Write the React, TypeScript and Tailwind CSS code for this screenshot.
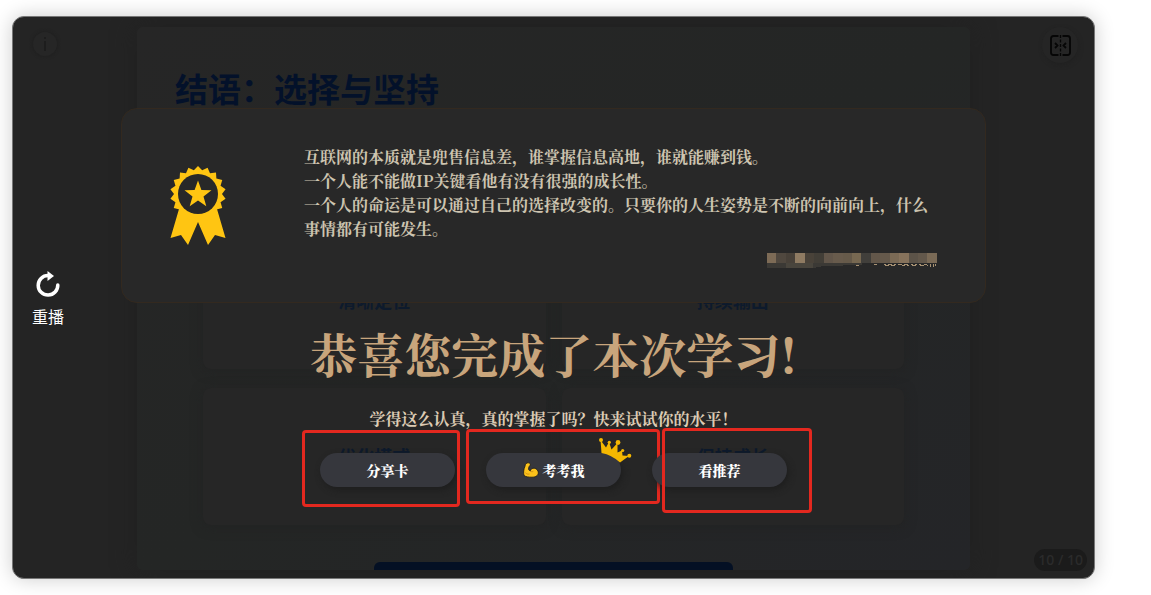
import React from 'react';

const serif = "font-['Noto_Serif_CJK_SC','Noto_Serif_SC','Noto_Sans_CJK_SC',serif]";
const sans = "font-['Noto_Sans','Noto_Sans_CJK_SC',sans-serif]";

const quotes = [
  '互联网的本质就是兜售信息差，谁掌握信息高地，谁就能赚到钱。',
  '一个人能不能做IP关键看他有没有很强的成长性。',
  '一个人的命运是可以通过自己的选择改变的。只要你的人生姿势是不断的向前向上，什么事情都有可能发生。',
];

const points = ['清晰定位', '持续输出', '优化模式', '保持成长'];

const blocks = [
  '#7d6b56', '#50483f', '#484139', '#8f7b62', '#494239', '#423e37', '#62564a', '#685b4c', '#665a4a',
  '#776851', '#413f3b', '#63574a', '#65594b', '#7b6a55', '#87735c', '#5c5348', '#63584b', '#7a6a56',
];

// 18 teeth round the rosette
const rosette = Array.from({ length: 36 }, (_, i) => {
  const r = i % 2 === 0 ? 28 : 24;
  const a = (i * Math.PI) / 18 - Math.PI / 2;
  return `${(28 + r * Math.cos(a)).toFixed(2)},${(28 + r * Math.sin(a)).toFixed(2)}`;
}).join(' ');

const MedalIcon: React.FC = () => (
  <svg className="h-[79px] w-14 shrink-0" viewBox="0 0 56 79" fill="#ffc512" aria-hidden="true">
    <path d="M9 43 L0.5 72 L11 69 L18 79 L28 56 L38 79 L45 69 L55.5 72 L47 43Z" />
    <polygon points={rosette} />
    <circle cx="28" cy="28" r="20" fill="#282828" />
    <path d="M28 14.5 L31.4 24 L41.5 24.3 L33.5 30.4 L36.3 40.2 L28 34.5 L19.7 40.2 L22.5 30.4 L14.5 24.3 L24.6 24Z" />
  </svg>
);

const ReplayIcon: React.FC = () => (
  <svg className="h-[26px] w-6" viewBox="0 0 24 26" fill="none" aria-hidden="true">
    <path d="M12 4.5 A9.8 9.8 0 1 0 21.8 14" stroke="#fff" strokeWidth="3.5" strokeLinecap="round" />
    <path d="M11.5 0 L18 5 L11.5 10Z" fill="#fff" />
  </svg>
);

const SplitIcon: React.FC = () => (
  <svg className="size-[21px]" viewBox="0 0 21 21" fill="none" stroke="#060606" strokeWidth="1.8" aria-hidden="true">
    <path d="M8.5 1 H3.5 Q1 1 1 3.5 V17.5 Q1 20 3.5 20 H8.5" />
    <path d="M12.5 1 H17.5 Q20 1 20 3.5 V17.5 Q20 20 17.5 20 H12.5" />
    <path d="M10.5 0 V21" strokeWidth="1.3" strokeDasharray="3 1.5" />
    <path d="M5 8 L7.5 10.5 L5 13 M16 8 L13.5 10.5 L16 13" />
  </svg>
);

const BicepsIcon: React.FC = () => (
  <svg className="size-4" viewBox="0 0 16 16" aria-hidden="true">
    <path
      d="M3.2 1.5 C4.5 .4 6.5 .8 7.2 1.9 C7.6 2.8 7 4.2 6 4.4 L5.5 7.3 C6 8.2 6.6 8.7 7.3 9 C7.6 7.2 9.3 6 11.2 6.2 C13.6 6.5 15.3 8.5 15.3 10.7 C15.3 13.6 12.5 15.2 8.9 15.2 C5.5 15.2 2.4 14.8 1 13.4 C.2 11 .7 7 2 4.3 C2.4 3.2 2.2 2.2 3.2 1.5Z"
      fill="#fcc21b"
      stroke="#181818"
      strokeWidth=".8"
    />
    <path d="M7.2 9 C8 9.8 9.3 9.9 10.3 9.3 M2.5 10.8 C3.5 12 5 12.4 6.5 12" fill="none" stroke="#c98713" strokeWidth=".9" />
  </svg>
);

const CrownIcon: React.FC = () => (
  <svg
    className="absolute -top-[17px] -right-3 h-[27px] w-9"
    viewBox="0 0 36 27"
    fill="#f5b800"
    aria-hidden="true"
  >
    <path d="M3.5 4 L9 11.5 L12 6 L14.5 13.5 L20.5 7 L20.5 16.5 L25 14.5 L25.5 19.5 L32 20 L23 26.5 Q15 19 4.5 17Z" />
    <circle cx="4" cy="4" r="2" />
    <circle cx="12.3" cy="6.3" r="1.6" />
    <circle cx="21" cy="6.5" r="2.4" />
    <circle cx="25.7" cy="14.5" r="1.6" />
    <circle cx="32.3" cy="19.8" r="2" />
  </svg>
);

const Slide: React.FC = () => (
  <div className={`absolute inset-0 px-[124px] pt-[10px] pb-2 ${sans}`}>
    <div className="h-full overflow-hidden rounded-md bg-linear-to-br from-[#262626] via-[#242625] to-[#242528] px-[66px] pt-[43px] shadow-[0_0_24px_#212121]">
      <h1 className="-ml-7 text-[33px] leading-10 font-bold text-[#03112a]">结语：选择与坚持</h1>
      <div className="mt-[122px] grid grid-cols-2 gap-x-4 gap-y-[19px]">
        {points.map((point) => (
          <div
            key={point}
            className="flex h-[137px] items-center justify-center rounded-lg bg-[#262626] pt-px text-lg font-bold text-[#0d1a2c] shadow-[0_2px_12px_#222323]"
          >
            {point}
          </div>
        ))}
      </div>
      <div className="mx-auto mt-[37px] h-10 w-[359px] rounded-md bg-[#041024]" />
    </div>
  </div>
);

const Certificate: React.FC = () => (
  <section className="flex min-h-[195px] rounded-2xl border border-[#33291f] bg-[#282828] px-12">
    <div className="pt-[57px]">
      <MedalIcon />
    </div>
    <div className="ml-[78px] min-w-0 flex-1 pt-9 text-base leading-6 font-bold text-[#cdc4b0]">
      {quotes.map((quote) => (
        <p key={quote}>{quote}</p>
      ))}
      <div className="mt-3 flex justify-end" aria-hidden="true">
        <svg className="h-[15px] w-[170px]" viewBox="0 0 170 15" shapeRendering="crispEdges">
          <path d="M0 10 H95 V12 L56 13 L46 15 H0Z" fill="#3b3935" />
          <path d="M19 10 H46 V15 H19Z" fill="#49453d" />
          {blocks.map((color, i) => (
            <rect key={i} x={i * 9.44} y="0" width="9.6" height="10" fill={color} />
          ))}
          <path
            d="M89 12h3 M107 11h3 M117 11l3 2 3-2 3 2 3-2 M131 12l3-1 2 2 3-2 3 2 M144 11l3 2 3-2 M152 11l3 2 4-2 2 2 M163 11v3 M166 11v3 M168 11v2"
            fill="none"
            stroke="#a89273"
          />
        </svg>
      </div>
    </div>
  </section>
);

const actionClass =
  'flex h-[34px] w-[135px] items-center justify-center gap-1 rounded-full bg-[#36373d] text-sm font-black text-white shadow-[2px_3px_6px_#1e1e1e]';

const Actions: React.FC = () => (
  <div className="mt-[22px] flex justify-center gap-[31px]">
    <div className="relative">
      <button type="button" className={actionClass}>分享卡</button>
      <span className="pointer-events-none absolute -top-[23px] -left-[18px] h-[77px] w-[158px] rounded-sm border-3 border-[#e3281f]" />
    </div>
    <div className="relative">
      <button type="button" className={actionClass}>
        <BicepsIcon />
        考考我
      </button>
      <CrownIcon />
      <span className="pointer-events-none absolute -top-6 -left-5 h-[75px] w-[194px] rounded-sm border-3 border-[#e3281f]" />
    </div>
    <div className="relative">
      <button type="button" className={actionClass}>看推荐</button>
      <span className="pointer-events-none absolute -top-[25px] left-[10px] h-[85px] w-[150px] rounded-sm border-3 border-[#e3281f]" />
    </div>
  </div>
);

export default function App() {
  return (
    <div className={`min-h-screen bg-white pt-4 pr-14 pb-4 pl-3 ${serif}`}>
      <main className="relative overflow-hidden rounded-xl border-[1px] border-[#777] bg-[#242424] shadow-[0_0_20px_#00000033]">
        <Slide />

        <button
          type="button"
          aria-label="课程信息"
          className="absolute top-[15px] left-5 flex size-6 items-center justify-center rounded-full bg-[#262626] shadow-[0_0_3px_1px_#202020]"
        >
          <svg className="h-3.5 w-1" viewBox="0 0 4 14" fill="#1d1d1d" aria-hidden="true">
            <rect x="1" y="0" width="2" height="2" />
            <rect x="1" y="4" width="2" height="10" />
          </svg>
        </button>
        <button
          type="button"
          aria-label="分屏"
          className="absolute top-[10px] right-4 flex size-9 items-center justify-center rounded-full bg-[#252525] shadow-[1px_2px_4px_#212121]"
        >
          <SplitIcon />
        </button>
        <span className={`absolute right-[7px] bottom-[7px] rounded-full bg-[#1b1b1b] px-1 text-sm leading-[22px] font-medium text-[#2b2b2b] ${sans}`}>
          10 / 10
        </span>

        <div className="relative flex items-center py-[91px]">
          <div className="w-[108px] shrink-0 pt-1 pl-[19px]">
            <button type="button" className={`flex flex-col items-center gap-2 text-base leading-6 text-white ${sans}`}>
              <ReplayIcon />
              重播
            </button>
          </div>
          <div className="min-w-0 flex-1">
            <Certificate />
            <h2 className="mt-4 text-center text-[47px] leading-[68px] font-bold text-[#c8a57c]">恭喜您完成了本次学习!</h2>
            <p className="mt-5 text-center text-base leading-6 font-bold text-[#dccbb4]">
              学得这么认真，真的掌握了吗？快来试试你的水平！
            </p>
            <Actions />
          </div>
          <div className="w-[108px] shrink-0" />
        </div>
      </main>
    </div>
  );
}
